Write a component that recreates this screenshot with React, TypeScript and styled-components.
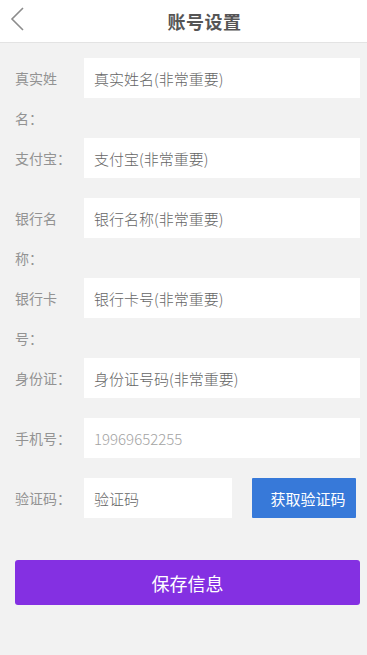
import React from 'react';
import styled, { createGlobalStyle } from 'styled-components';

const GlobalStyle = createGlobalStyle`
  html, body {
    margin: 0;
    padding: 0;
    background: #f2f2f2;
    font-family: "Noto Sans CJK SC", "Noto Sans", "Liberation Sans", sans-serif;
  }
  * {
    box-sizing: border-box;
  }
`;

const Page = styled.div`
  min-height: 655px;
  background: #f2f2f2;
`;

const Header = styled.header`
  position: relative;
  height: 43px;
  background: #fff;
  border-bottom: 1px solid #e3e3e3;
  display: flex;
  align-items: center;
  justify-content: center;
`;

const BackButton = styled.button`
  position: absolute;
  left: 6px;
  top: 5px;
  width: 22px;
  height: 28px;
  padding: 0;
  border: none;
  background: transparent;
  display: flex;
  align-items: center;
  justify-content: center;
`;

const Title = styled.h1`
  margin: 0 0 0 42px;
  font-size: 18px;
  font-weight: bold;
  color: #555;
  letter-spacing: 0.5px;
`;

const Form = styled.form`
  padding: 15px 7px 0 15px;
`;

const Row = styled.div`
  display: flex;
  align-items: flex-start;
  min-height: 60px;
`;

const Label = styled.label`
  flex: 0 0 60px;
  width: 60px;
  margin-right: 9px;
  font-size: 14px;
  line-height: 40px;
  color: #939393;
  word-break: break-all;
`;

const Input = styled.input<{ $light?: boolean; $width?: string }>`
  flex: ${(p) => (p.$width ? `0 0 ${p.$width}` : '1')};
  min-width: 0;
  height: 40px;
  padding: 0 10px;
  border: none;
  outline: none;
  background: #fff;
  font-family: inherit;
  font-size: 15px;
  font-weight: 300;
  color: ${(p) => (p.$light ? '#a3a3a3' : '#666')};

  &::placeholder {
    color: ${(p) => (p.$light ? '#a3a3a3' : '#666')};
  }
`;

const CodeButton = styled.button`
  margin-left: 20px;
  width: 104px;
  height: 40px;
  padding: 0 0 0 8px;
  border: none;
  border-radius: 1px;
  background: #3779d9;
  color: #fff;
  font-family: inherit;
  font-size: 15px;
`;

const SaveButton = styled.button`
  display: block;
  width: 345px;
  height: 45px;
  margin: 22px 0 0;
  border: none;
  border-radius: 3px;
  background: #8430e2;
  color: #fff;
  font-family: inherit;
  font-size: 18px;
`;

const fields = [
  { label: '真实姓名：', placeholder: '真实姓名(非常重要)' },
  { label: '支付宝：', placeholder: '支付宝(非常重要)' },
  { label: '银行名称：', placeholder: '银行名称(非常重要)' },
  { label: '银行卡号：', placeholder: '银行卡号(非常重要)' },
  { label: '身份证：', placeholder: '身份证号码(非常重要)' },
];

const App: React.FC = () => {
  return (
    <Page>
      <GlobalStyle />
      <Header>
        <BackButton type="button" aria-label="返回">
          <svg width="14" height="24" viewBox="0 0 14 24" fill="none">
            <path d="M13 1L2 12l11 11" stroke="#8c8c8c" strokeWidth="1.6" />
          </svg>
        </BackButton>
        <Title>账号设置</Title>
      </Header>

      <Form onSubmit={(e) => e.preventDefault()}>
        {fields.map((f) => (
          <Row key={f.label}>
            <Label>{f.label}</Label>
            <Input placeholder={f.placeholder} />
          </Row>
        ))}
        <Row>
          <Label>手机号：</Label>
          <Input $light defaultValue="19969652255" />
        </Row>
        <Row>
          <Label>验证码：</Label>
          <Input placeholder="验证码" $width="148px" />
          <CodeButton type="button">获取验证码</CodeButton>
        </Row>
        <SaveButton type="submit">保存信息</SaveButton>
      </Form>
    </Page>
  );
};

export default App;
